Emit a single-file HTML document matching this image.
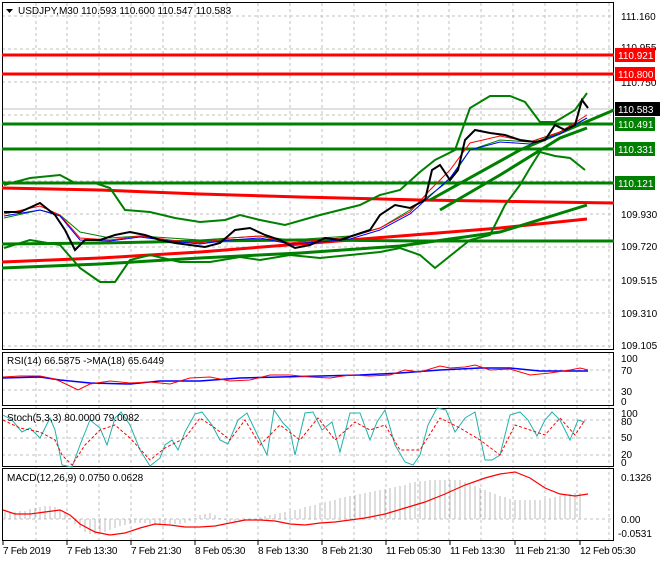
<!DOCTYPE html>
<html><head><meta charset="utf-8"><style>
body{margin:0;background:#fff;width:660px;height:560px;overflow:hidden;font-family:"Liberation Sans",sans-serif}
svg text{font-family:"Liberation Sans",sans-serif;font-size:10px}
</style></head><body>
<svg width="660" height="560" xmlns="http://www.w3.org/2000/svg">
<rect width="660" height="560" fill="#fff"/>
<g stroke="#c0c0c0" stroke-dasharray="3,3" stroke-width="1">
<path d="M36 3V350M67 3V350M99 3V350M131 3V350M163 3V350M195 3V350M227 3V350M258 3V350M290 3V350M322 3V350M354 3V350M386 3V350M418 3V350M449 3V350M481 3V350M513 3V350M545 3V350M577 3V350M609 3V350"/>
<path d="M36 352V540M67 352V540M99 352V540M131 352V540M163 352V540M195 352V540M227 352V540M258 352V540M290 352V540M322 352V540M354 352V540M386 352V540M418 352V540M449 352V540M481 352V540M513 352V540M545 352V540M577 352V540M609 352V540"/>
<path d="M2 16H614M2 49H614M2 82H614M2 115H614M2 148H614M2 181H614M2 214H614M2 247H614M2 280H614M2 313H614M2 346H614"/>
<path d="M2 370H614M2 390H614M2 420H614M2 438H614M2 455H614M2 519H614"/>
</g>
<line x1="2" y1="109" x2="614" y2="109" stroke="#c0c0c0"/>
<g fill="none" stroke="#000" stroke-width="1">
<rect x="2.5" y="2.5" width="611" height="347"/>
<rect x="2.5" y="352.5" width="611" height="53"/>
<rect x="2.5" y="408.5" width="611" height="58"/>
<rect x="2.5" y="468.5" width="611" height="72"/>
</g>
<g stroke-width="3">
<line x1="2" y1="55" x2="614" y2="55" stroke="#f00"/>
<line x1="2" y1="74" x2="614" y2="74" stroke="#f00"/>
<line x1="2" y1="124" x2="614" y2="124" stroke="#008000"/>
<line x1="2" y1="149" x2="614" y2="149" stroke="#008000"/>
<line x1="2" y1="183" x2="614" y2="183" stroke="#008000"/>
<polyline fill="none" stroke="#f00" points="2,188 100,190 200,194 300,197 420,200 614,203"/>
<polyline fill="none" stroke="#f00" points="2,262 100,258 200,252 300,244 400,236 500,228 587,219"/>
<polyline fill="none" stroke="#008000" points="2,244 100,243 200,241 300,240 420,241 614,241"/>
<polyline fill="none" stroke="#008000" points="2,268 100,264 200,258 300,253 400,246 500,232 587,205"/>
<polyline fill="none" stroke="#008000" points="430,200 520,150 614,110"/>
<polyline fill="none" stroke="#008000" points="440,210 500,175 560,138 587,128"/>
</g>
<g fill="none" stroke="#008000" stroke-width="2">
<polyline points="4,185 30,178 60,175 75,183 95,183 110,188 125,210 150,212 175,218 200,222 225,220 240,215 260,220 285,225 320,215 360,205 380,195 400,190 420,172 435,160 455,150 470,108 490,96 510,96 525,102 540,122 555,122 575,110 587,93"/>
<polyline points="4,248 30,240 60,245 80,268 100,282 115,282 130,260 150,255 180,262 210,262 240,257 260,260 290,255 320,258 350,255 380,252 400,248 420,255 435,268 445,260 470,240 490,235 505,205 520,185 530,168 540,152 555,156 570,158 585,170"/>
<polyline points="4,218 40,210 60,215 80,232 110,238 140,236 170,238 200,240 230,238 260,236 290,240 320,238 350,236 380,228 410,210 430,195 450,180 470,150 500,140 530,142 560,132 587,118" stroke-width="1"/>
</g>
<polyline fill="none" stroke="#f00" stroke-width="1" points="4,214 40,206 60,215 80,238 110,240 140,236 170,240 200,243 230,238 260,236 290,243 320,240 350,237 380,228 410,212 430,190 450,170 470,143 500,136 530,142 560,132 587,115"/>
<polyline fill="none" stroke="#00f" stroke-width="1" points="4,216 40,210 60,216 80,240 110,241 140,237 170,241 200,244 230,240 260,238 290,244 320,242 350,239 380,230 410,214 430,196 450,178 470,150 500,142 530,144 560,134 587,118"/>
<polyline fill="none" stroke="#000" stroke-width="2" points="4,212 20,212 40,203 55,215 65,230 75,250 85,240 100,240 115,235 130,232 145,235 160,240 175,243 190,245 205,247 220,243 235,230 250,228 265,235 280,240 295,248 310,245 325,238 340,240 355,235 370,230 380,215 395,205 410,208 425,200 432,170 440,165 450,180 458,170 465,140 475,130 490,133 505,135 520,140 535,142 545,140 555,125 565,130 575,125 582,100 588,108"/>
<g>
<text x="621" y="20">111.160</text>
<text x="621" y="51">110.955</text>
<text x="621" y="86">110.750</text>
<text x="621" y="218">109.930</text>
<text x="621" y="250">109.720</text>
<text x="621" y="284">109.515</text>
<text x="621" y="317">109.310</text>
<text x="621" y="349">109.105</text>
</g>
<rect x="615" y="48" width="40" height="14" fill="#f00"/><text x="618" y="59" fill="#fff">110.921</text>
<rect x="615" y="67" width="40" height="14" fill="#f00"/><text x="618" y="78" fill="#fff">110.800</text>
<rect x="615" y="102" width="45" height="14" fill="#000"/><text x="618" y="113" fill="#fff">110.583</text>
<rect x="615" y="117" width="40" height="14" fill="#008000"/><text x="618" y="128" fill="#fff">110.491</text>
<rect x="615" y="142" width="40" height="14" fill="#008000"/><text x="618" y="153" fill="#fff">110.331</text>
<rect x="615" y="176" width="40" height="14" fill="#008000"/><text x="618" y="187" fill="#fff">110.121</text>
<path d="M6 9h7l-3.5 4z" fill="#000"/>
<text x="18" y="14">USDJPY,M30  110.593 110.600 110.547 110.583</text>
<polyline fill="none" stroke="#00f" stroke-width="1.5" points="3,378 40,377 60,380 90,383 130,384 160,381 200,381 240,378 280,377 320,376 360,375 400,373 440,370 480,368 510,368 540,371 580,371 588,371"/>
<polyline fill="none" stroke="#f00" points="3,377 20,376 40,376 55,379 70,386 78,390 90,384 110,381 130,383 150,382 170,384 190,378 210,377 230,381 250,380 270,375 290,375 310,377 330,378 350,375 370,376 390,375 405,370 420,372 440,366 450,368 465,367 475,365 490,370 510,369 530,375 550,373 570,370 580,368 588,370"/>
<text x="7" y="364">RSI(14) 66.5875  -&gt;MA(18) 65.6449</text>
<text x="621" y="362">100</text><text x="621" y="374">70</text><text x="621" y="395">30</text><text x="621" y="405">0</text>
<polyline fill="none" stroke="#20b2aa" points="3,415 12,420 22,432 30,428 40,438 50,418 55,430 62,465 72,467 80,445 90,420 100,428 107,445 115,418 121,412 130,425 140,450 150,466 160,458 165,445 172,440 178,450 185,432 195,414 202,412 212,425 220,440 228,444 238,420 247,413 255,430 267,455 274,410 283,423 290,430 295,455 305,413 313,412 322,430 332,422 340,452 350,413 360,413 370,440 377,422 385,410 395,445 405,462 413,465 420,455 428,425 437,408 446,410 455,432 465,418 475,412 485,460 492,460 500,455 510,415 520,412 528,420 537,436 545,420 552,412 560,420 570,440 578,420 585,422"/>
<polyline fill="none" stroke="#f00" stroke-dasharray="3,2" points="3,420 20,428 40,432 55,440 62,455 72,465 85,445 100,430 115,425 130,438 150,460 165,448 185,438 200,418 215,428 230,440 245,420 260,445 280,425 300,440 318,418 335,440 355,422 370,430 385,425 400,450 420,450 440,418 460,428 480,440 500,455 515,425 530,430 545,435 560,418 575,435 585,420"/>
<text x="7" y="421">Stoch(5,3,3) 80.0000 79.0082</text>
<text x="621" y="417">100</text><text x="621" y="425">80</text><text x="621" y="441">50</text><text x="621" y="458">20</text><text x="621" y="466">0</text>
<g stroke="#bbb" stroke-width="1">
<path d="M5 519V512M10 519V512M15 519V512M20 519V511M25 519V511M30 519V509M35 519V508M40 519V507M45 519V506M50 519V506M55 519V507M60 519V510M65 519V513M70 519V518M75 519V524M80 519V528M85 519V532M90 519V534M95 519V534M100 519V533M105 519V532M110 519V530M115 519V528M120 519V526M125 519V525M130 519V524M135 519V523M140 519V523M145 519V523M150 519V524M155 519V524M160 519V524M165 519V524M170 519V524M175 519V524M180 519V524M185 519V523M190 519V521M195 519V518M200 519V515M205 519V514M210 519V513M215 519V515M220 519V518M225 519V520M230 519V522M235 519V522M240 519V522M245 519V521M250 519V520M255 519V519M260 519V517M265 519V516M270 519V515M275 519V514M280 519V513M285 519V512M290 519V511M295 519V510M300 519V509M305 519V507M310 519V506M315 519V505M320 519V503M325 519V502M330 519V501M335 519V500M340 519V498M345 519V497M350 519V496M355 519V495M360 519V494M365 519V493M370 519V492M375 519V491M380 519V490M385 519V489M390 519V488M395 519V487M400 519V486M405 519V485M410 519V483M415 519V482M420 519V481M425 519V481M430 519V480M435 519V480M440 519V480M445 519V480M450 519V480M455 519V480M460 519V480M465 519V482M470 519V484M475 519V486M480 519V488M485 519V490M490 519V492M495 519V494M500 519V496M505 519V497M510 519V499M515 519V500M520 519V500M525 519V500M530 519V500M535 519V500M540 519V500M545 519V499M550 519V498M555 519V497M560 519V496M565 519V495M570 519V494M575 519V493M580 519V493"/>
</g>
<polyline fill="none" stroke="#f00" stroke-width="1.2" points="3,510 15,514 30,514 45,512 60,510 70,515 80,524 95,532 110,535 125,533 140,528 155,524 170,525 185,527 200,527 215,526 230,523 245,520 260,520 275,521 290,524 305,525 320,523 335,522 350,520 365,518 385,514 405,508 425,502 445,494 465,485 485,478 500,474 515,472 530,478 545,488 560,494 575,496 588,494"/>
<text x="7" y="481">MACD(12,26,9) 0.0750 0.0628</text>
<text x="621" y="481">0.1326</text><text x="621" y="523">0.00</text><text x="618" y="537">-0.0531</text>
<g stroke="#000"><path d="M3 541v4M67 541v4M131 541v4M195 541v4M258 541v4M322 541v4M386 541v4M450 541v4M515 541v4M580 541v4"/></g>
<g letter-spacing="-0.3">
<text x="3" y="554">7 Feb 2019</text>
<text x="67" y="554">7 Feb 13:30</text>
<text x="131" y="554">7 Feb 21:30</text>
<text x="195" y="554">8 Feb 05:30</text>
<text x="258" y="554">8 Feb 13:30</text>
<text x="322" y="554">8 Feb 21:30</text>
<text x="386" y="554">11 Feb 05:30</text>
<text x="450" y="554">11 Feb 13:30</text>
<text x="515" y="554">11 Feb 21:30</text>
<text x="580" y="554">12 Feb 05:30</text>
</g>
</svg>
</body></html>
